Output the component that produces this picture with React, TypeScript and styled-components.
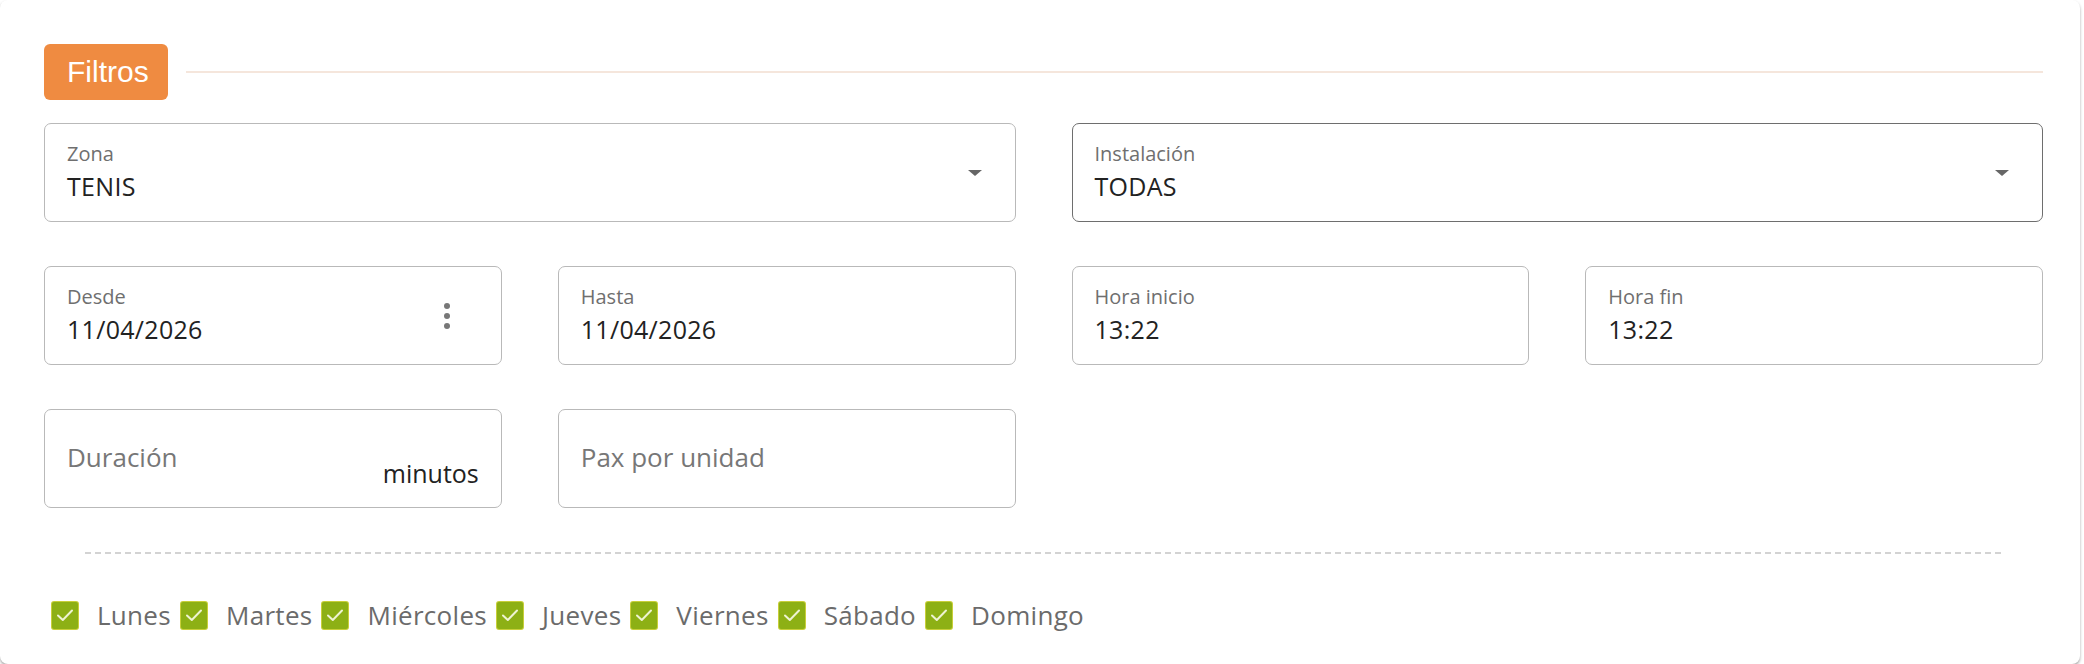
import styled, { createGlobalStyle } from 'styled-components';

const GlobalStyle = createGlobalStyle`
  html, body {
    margin: 0;
    padding: 0;
    background: #ffffff;
  }
  body {
    font-family: 'Open Sans', 'Liberation Sans', sans-serif;
  }
`;

const Card = styled.div`
  width: 2080px;
  box-sizing: border-box;
  padding: 44px 37px 34px 44px;
  background: #ffffff;
  border-radius: 8px;
  box-shadow: 0 2px 3px rgba(0, 0, 0, 0.35);
`;

const Header = styled.div`
  display: flex;
  align-items: center;
  margin-bottom: 23px;
`;

const Badge = styled.div`
  width: 124px;
  height: 56px;
  box-sizing: border-box;
  padding-left: 23px;
  display: flex;
  align-items: center;
  background: #ef8b41;
  border-radius: 6px;
  color: #fff;
  font-family: 'Liberation Sans', Arial, sans-serif;
  font-size: 30px;
`;

const HeaderLine = styled.div`
  flex: 1;
  height: 2px;
  margin-left: 18px;
  background: #f5e6dc;
`;

const Grid = styled.div`
  display: grid;
  grid-template-columns: repeat(4, 1fr);
  column-gap: 56px;
  row-gap: 44px;
`;

const Field = styled.div<{ $span?: number; $active?: boolean }>`
  grid-column: span ${(p) => p.$span ?? 1};
  position: relative;
  height: 99px;
  box-sizing: border-box;
  padding: 0 22px;
  display: flex;
  align-items: center;
  border: 1.5px solid ${(p) => (p.$active ? '#6e6e6e' : '#b9b9b9')};
  border-radius: 7px;
  background: #fff;
`;

const FieldBody = styled.div`
  flex: 1;
  display: flex;
  flex-direction: column;
  gap: 5px;
  margin-top: -2px;
`;

const Label = styled.span`
  font-size: 20px;
  line-height: 24px;
  color: #6f6f6f;
`;

const Value = styled.span`
  font-size: 25px;
  line-height: 30px;
  color: #222;
  letter-spacing: 0.3px;
`;

const Placeholder = styled.span`
  flex: 1;
  font-size: 26px;
  line-height: 30px;
  color: #777;
  margin-top: -3px;
`;

const Suffix = styled.span`
  align-self: flex-end;
  margin-bottom: 19px;
  font-size: 25px;
  line-height: 30px;
  color: #222;
`;

const Caret = styled.span`
  width: 0;
  height: 0;
  margin-right: 11px;
  border-left: 7px solid transparent;
  border-right: 7px solid transparent;
  border-top: 6px solid #666;
`;

const Dots = styled.span`
  display: flex;
  flex-direction: column;
  gap: 4px;
  margin-right: 29px;
  & > i {
    width: 6px;
    height: 6px;
    border-radius: 50%;
    background: #777;
  }
`;

const Divider = styled.div`
  margin: 44px 42px 46px 41px;
  border-top: 2px dashed #d3d3d3;
`;

const Days = styled.div`
  display: flex;
  align-items: center;
  padding-left: 8px;
`;

const Day = styled.label`
  display: flex;
  align-items: center;
  margin-right: 10px;
  font-size: 26px;
  line-height: 30px;
  letter-spacing: 0.3px;
  color: #6b6b6b;
`;

const Check = styled.span`
  width: 26px;
  height: 27px;
  margin-right: 19px;
  display: flex;
  align-items: center;
  justify-content: center;
  background: #8db015;
  border-radius: 2px;
  box-shadow: 0 0 0 1px #c8cf3a;
`;

const days = ['Lunes', 'Martes', 'Miércoles', 'Jueves', 'Viernes', 'Sábado', 'Domingo'];

export default function App() {
  return (
    <>
      <GlobalStyle />
      <Card>
        <Header>
          <Badge>Filtros</Badge>
          <HeaderLine />
        </Header>
        <Grid>
          <Field $span={2}>
            <FieldBody>
              <Label>Zona</Label>
              <Value>TENIS</Value>
            </FieldBody>
            <Caret />
          </Field>
          <Field $span={2} $active>
            <FieldBody>
              <Label>Instalación</Label>
              <Value>TODAS</Value>
            </FieldBody>
            <Caret />
          </Field>
          <Field>
            <FieldBody>
              <Label>Desde</Label>
              <Value>11/04/2026</Value>
            </FieldBody>
            <Dots>
              <i />
              <i />
              <i />
            </Dots>
          </Field>
          <Field>
            <FieldBody>
              <Label>Hasta</Label>
              <Value>11/04/2026</Value>
            </FieldBody>
          </Field>
          <Field>
            <FieldBody>
              <Label>Hora inicio</Label>
              <Value>13:22</Value>
            </FieldBody>
          </Field>
          <Field>
            <FieldBody>
              <Label>Hora fin</Label>
              <Value>13:22</Value>
            </FieldBody>
          </Field>
          <Field>
            <Placeholder>Duración</Placeholder>
            <Suffix>minutos</Suffix>
          </Field>
          <Field>
            <Placeholder>Pax por unidad</Placeholder>
          </Field>
        </Grid>
        <Divider />
        <Days>
          {days.map((d) => (
            <Day key={d}>
              <Check>
                <svg width="18" height="14" viewBox="0 0 18 14">
                  <path d="M2 7.5 L6.8 12 L16 2.5" fill="none" stroke="#eef3d2" strokeWidth="2" strokeLinecap="round" strokeLinejoin="round" />
                </svg>
              </Check>
              {d}
            </Day>
          ))}
        </Days>
      </Card>
    </>
  );
}
